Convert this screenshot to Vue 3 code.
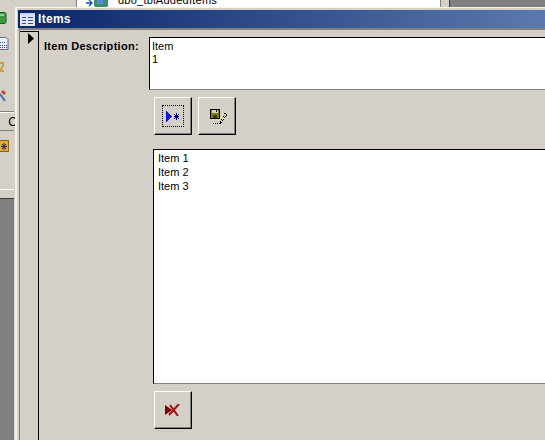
<template>
  <div class="desktop">
    <!-- parent app behind the form -->
    <div class="left-rail">
      <svg class="rail-icon green" width="16" height="16" viewBox="0 0 16 16">
        <path d="M-1 2.5h6l1 1v9l-1 1h-6z" fill="#3f9a3f" stroke="#1c5c1c" />
        <path d="M0 4h4v2H0z" fill="#8ed08e" />
      </svg>
      <svg class="rail-icon calc" width="16" height="16" viewBox="0 0 16 16">
        <path d="M-1 1.5h7l2 2v10h-9z" fill="#e8eefa" stroke="#5a6f9a" />
        <path d="M0 6.5h6M0 9.5h7M0 11.5h7" stroke="#39527f" stroke-dasharray="1 1" />
      </svg>
      <svg class="rail-icon key" width="16" height="16" viewBox="0 0 16 16">
        <path d="M-1 3h4v3l-3 5h4" fill="none" stroke="#c9a13c" stroke-width="2" />
      </svg>
      <svg class="rail-icon tools" width="16" height="16" viewBox="0 0 16 16">
        <path d="M0 7l5 7" stroke="#4a6fb0" stroke-width="2" />
        <path d="M2 4l3 3" stroke="#c8452e" stroke-width="3" />
      </svg>
      <div class="rail-tab"><span>C</span></div>
      <svg class="rail-icon folder" width="16" height="16" viewBox="0 0 16 16">
        <path d="M-1 1.5h9.5v11H-1z" fill="#e0ac3c" stroke="#8a6414" />
        <path d="M2 5l4 5M6 5l-4 5M1 7.5h6M4 4v7" stroke="#2d2a66" />
      </svg>
      <div class="rail-pit"></div>
    </div>

    <div class="table-list">
      <svg width="24" height="8" viewBox="0 0 24 8">
        <path d="M0 3h5M3 0l3 3-3 3" fill="none" stroke="#1b4fc4" stroke-width="1.4" />
        <path d="M8 0h14v6l-3 2h-8l-3-2z" fill="#3d8f6a" />
        <path d="M11 0h6v4h-6z" fill="#5c86d8" />
      </svg>
      <span>dbo_tblAddedItems</span>
    </div>
    <div class="mdi-back"></div>

    <div class="window">
      <div class="titlebar">
        <svg width="15" height="13" viewBox="0 0 15 13">
          <path d="M0 0h15v13H0z" fill="#dfe6f2" />
          <path d="M0 0h15v2H0z" fill="#c9d3e6" />
          <path d="M2 4h4v1H2zM2 7h4v1H2zM2 10h4v1H2zM8 4h5v1H8zM8 7h5v1H8zM8 10h5v1H8z" fill="#3a4f86" />
        </svg>
        <span>Items</span>
      </div>
      <div class="form">
        <div class="selector">
          <svg width="6" height="11" viewBox="0 0 6 11">
            <path d="M0 0l6 5.5L0 11z" fill="#000" />
          </svg>
        </div>
        <div class="detail">
          <div class="field">
            <label>Item Description:</label>
            <div class="textbox">Item<br />1</div>
          </div>
          <div class="btn-row">
            <button class="tool-btn">
              <span class="focus">
                <svg width="14" height="11" viewBox="0 0 14 11" shape-rendering="crispEdges">
                  <path d="M0 0h1v11H0zM1 1h1v9H1zM2 2h1v7H2zM3 3h1v5H3zM4 4h1v3H4zM5 5h1v1H5z" fill="#1414e0" />
                  <path d="M10 2h1v7h-1zM8 5h5v1H8zM9 4h3v3H9zM8 3h1v1H8zM12 3h1v1h-1zM8 7h1v1H8zM12 7h1v1h-1z" fill="#000080" />
                </svg>
              </span>
            </button>
            <button class="tool-btn">
              <svg class="save-icon" width="17" height="16" viewBox="0 0 17 16" shape-rendering="crispEdges">
                <path d="M0 0h10v10H0z" fill="#000" />
                <path d="M1 1h8v8H1z" fill="#808000" />
                <path d="M2 1h6v3H2z" fill="#d4d0c8" />
                <path d="M6 1h1v2H6z" fill="#000" />
                <path d="M3 6h4v3H3z" fill="#3a3a10" />
                <path d="M3 14h1v1H3zM5 14h1v1H5zM7 14h1v1H7zM9 14h1v1H9z" fill="#000" />
                <path d="M14 4h2v1h1v2h-1v1h-1v1h-1v2h-1v1h-1v2h-1v1h-1v-3h1v-2h1v-1h1V7h1V6h1z" fill="#000" />
                <path d="M14 5h2v2h-1v1h-1v2h-1v1h-1v2h-1v-2h1V9h1V8h1V6h1z" fill="#f6d85a" />
              </svg>
            </button>
          </div>
          <div class="listbox">
            <div v-for="item in items" :key="item">{{ item }}</div>
          </div>
          <div class="btn-row">
            <button class="tool-btn">
              <svg width="16" height="12" viewBox="0 0 16 12">
                <path d="M0 1l7 5-7 5z" fill="#800000" />
                <path d="M4 11L14 0M5 1l8 11" stroke="#a01010" stroke-width="2" fill="none" />
              </svg>
            </button>
          </div>
        </div>
      </div>
    </div>
  </div>
</template>

<script setup>
const items = ["Item 1", "Item 2", "Item 3"];
</script>

<style>
html,
body {
  margin: 0;
  overflow: hidden;
}
</style>

<style scoped>
.desktop {
  position: relative;
  width: 545px;
  height: 440px;
  overflow: hidden;
  background: #d4d0c8;
  font-family: "Liberation Sans", Arial, sans-serif;
  font-size: 11px;
  color: #000;
}

/* parent app */
.left-rail {
  position: absolute;
  left: 0;
  top: 0;
  width: 15px;
  height: 440px;
  overflow: hidden;
}
.rail-icon {
  position: absolute;
  left: 0;
}
.green {
  top: 10px;
}
.calc {
  top: 36px;
}
.key {
  top: 60px;
}
.tools {
  top: 87px;
}
.folder {
  top: 139px;
}
.rail-tab {
  position: absolute;
  top: 111px;
  left: 0;
  width: 14px;
  height: 18px;
  border-top: 1px solid #808080;
  border-bottom: 1px solid #808080;
  box-shadow: inset 0 1px 0 #fff;
  text-align: right;
  line-height: 20px;
  font-size: 12px;
}
.rail-tab span {
  margin-right: -3px;
}
.rail-pit {
  position: absolute;
  top: 189px;
  left: 0;
  width: 14px;
  height: 251px;
  border-top: 1px solid #fff;
  background: linear-gradient(#d4d0c8 8px, #404040 8px, #404040 9px, #808080 9px);
}
.table-list {
  position: absolute;
  left: 76px;
  top: 0;
  width: 365px;
  height: 8px;
  padding-left: 9px;
  display: flex;
  gap: 8px;
  background: #fff;
  border-left: 1px solid #808080;
  border-right: 1px solid #808080;
  box-sizing: border-box;
  overflow: hidden;
}
.table-list span {
  margin-top: -7px;
  line-height: 14px;
  letter-spacing: 0.25px;
}
.mdi-back {
  position: absolute;
  left: 449px;
  top: 0;
  width: 96px;
  height: 8px;
  background: #808080;
  border-left: 1px solid #404040;
  box-sizing: border-box;
}

/* form window */
.window {
  position: absolute;
  left: 15px;
  top: 7px;
  width: 1030px;
  height: 440px;
  box-sizing: border-box;
  background: #d4d0c8;
  border-top: 1px solid #f4f3ef;
  border-left: 2px solid #f4f3ef;
  padding: 2px 0 0 1px;
}
.titlebar {
  height: 18px;
  display: flex;
  align-items: center;
  gap: 3px;
  padding-left: 2px;
  background: linear-gradient(90deg, #0a246a, #a6caf0);
  color: #fff;
  font-weight: bold;
  font-size: 12px;
  letter-spacing: 0.3px;
}
.form {
  display: flex;
  height: 411px;
  margin-left: 1px;
  border-top: 2px solid #808080;
  border-left: 1px solid #808080;
}
.selector {
  width: 18px;
  box-sizing: border-box;
  flex: none;
  margin-top: 1px;
  padding: 1px 0 0 8px;
  display: flex;
  align-items: flex-start;
  border-top: 1px solid #000;
  border-right: 1px solid #000;
  width: 19px;
}
.detail {
  flex: 1;
  padding: 7px 0 0 5px;
}
.field {
  display: flex;
}
.field label {
  width: 105px;
  flex: none;
  padding-top: 2px;
  font-weight: bold;
  line-height: 14px;
  letter-spacing: 0.3px;
}
.textbox {
  flex: 1;
  height: 49px;
  padding: 2px 0 0 2px;
  background: #fff;
  border-top: 1px solid #000;
  border-left: 1px solid #000;
  border-bottom: 1px solid #808080;
  line-height: 13px;
}
.btn-row {
  display: flex;
  gap: 6px;
  margin: 7px 0 0 110px;
}
.tool-btn {
  width: 38px;
  height: 38px;
  padding: 0;
  display: flex;
  align-items: center;
  justify-content: center;
  background: #d4d0c8;
  border: 1px solid;
  border-color: #fff #000 #000 #fff;
  box-shadow: inset -1px -1px 0 #808080;
}
.focus {
  width: 20px;
  height: 20px;
  display: flex;
  align-items: center;
  justify-content: center;
  border: 1px dotted #000;
}
.save-icon {
  margin: 2px 0 0 2px;
}
.listbox {
  height: 232px;
  margin: 14px 0 0 109px;
  padding: 1px 0 0 4px;
  background: #fff;
  border: 1px solid #000;
  border-bottom: 1px solid #808080;
  border-right: none;
  line-height: 14px;
}
</style>
